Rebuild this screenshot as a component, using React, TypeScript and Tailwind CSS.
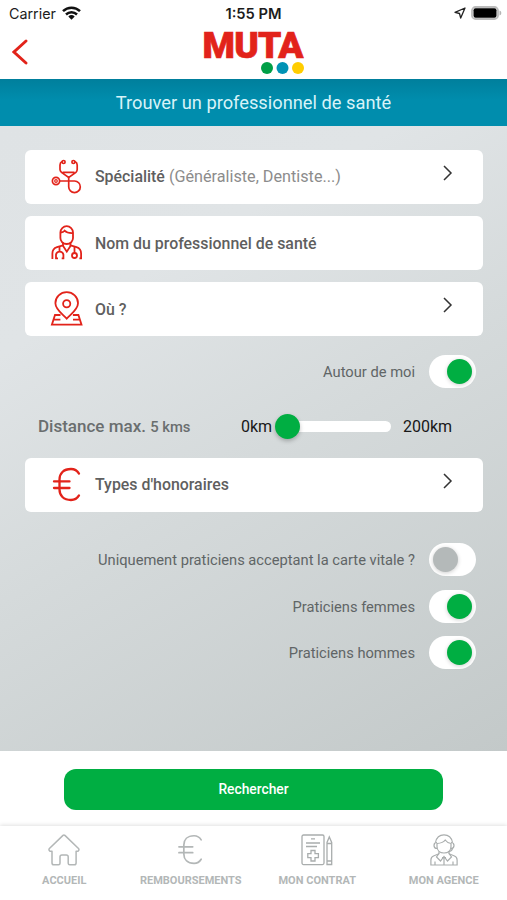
import { useState, type ReactNode } from "react"

import { clsx } from "clsx"

function StethoscopeIcon() {
  return (
    <svg width="34" height="36" viewBox="0 0 34 36" fill="none" stroke="#e2231a" strokeWidth="1.7">
      <circle cx="13.600" cy="3" r="1.500" />
      <circle cx="23.400" cy="3" r="1.500" />
      <path d="M12 2.600C10.400 3.400 10 4.600 10 6v4.600c0 1.200.6 2 1.500 2.800l7.200 5 7.200-5c.9-.8 1.300-1.600 1.300-2.800V6c0-1.400-.6-2.600-2.200-3.400M12.500 13.300h12" />
      <circle cx="6" cy="22" r="3.600" />
      <circle cx="6" cy="22" r="1.300" strokeWidth="1.200" />
      <path d="M9.600 22h15a5.800 5.800 0 1 1-5.900 5.800v-9.500" />
    </svg>
  )
}

function DoctorIcon() {
  return (
    <svg width="34" height="36" viewBox="0 0 34 36" fill="none" stroke="#e2231a" strokeWidth="1.800">
      <path d="M10.400 13V7.500a6.300 6.300 0 0 1 12.600 0V13c0 2.800-2.200 6-6.300 6s-6.300-3.200-6.300-6Z" />
      <path d="M10.600 7.500c2.200-.2 3.200-.8 4-1.800 2 2 5 2.600 8.300 2.400" />
      <path d="M13 17.500v2.800L7 22.200c-3 1-4.600 3.400-4.600 6.400V34M20.500 17.500v2.800l6 1.900c3 1 4.600 3.400 4.600 6.400V34" />
      <path d="m12.800 20.500 4 6.200 4-6.200" />
      <path d="M6 34v-4.500a3.800 3.800 0 0 1 7.400 0V34M9.500 25.800v-4.300M8 33.300H5.200M14.200 33.300h-2.500M31.900 33.300h-2.500M24.500 21.500V28" />
      <circle cx="24.500" cy="30.500" r="2.500" />
    </svg>
  )
}

function PinIcon() {
  return (
    <svg width="34" height="36" viewBox="0 0 34 36" fill="none" stroke="#e2231a" strokeWidth="1.800">
      <path d="M16.700 27.600C12 22.600 5.400 18.400 5.400 12.200a11.300 11 0 0 1 22.600 0c0 6.200-6.600 10.400-11.300 15.400Z" />
      <circle cx="16.700" cy="12.700" r="3.600" />
      <path d="M10.500 24H5L1.900 33.600h29.600L28.400 24h-5.500M4 28.600h6.400M29.400 28.600H23" />
    </svg>
  )
}

function EuroIcon({ className }: { className?: string }) {
  return (
    <svg viewBox="0 0 34 36" fill="none" stroke="currentColor" strokeLinecap="round" className={className}>
      <path d="M29 6.600C27 3.200 24.500 2 21 2 13.500 2 9.500 6.500 9.500 12.500v10c0 6 4 10.500 11.500 10.500 3.500 0 6-1.200 8-4.600M4 14.400h15.500M4 21h15.500" />
    </svg>
  )
}

function HomeIcon() {
  return (
    <svg width="32" height="32" viewBox="0 0 32 32" fill="none" stroke="#b3b7b7" strokeWidth="1.500" strokeLinejoin="round">
      <path d="M15 1.400c.6-.6 1.300-.6 1.900 0L30.500 14.500c.9 1 .3 2.800-1.200 2.800h-1.200V29c0 1.200-.7 1.800-1.800 1.800h-4.600c-1 0-1.500-.5-1.500-1.500v-6.500c0-1.200-.7-1.900-1.900-1.900h-4.400c-1.200 0-1.900.7-1.900 1.900v6.500c0 1-.5 1.500-1.500 1.500H5.900c-1.200 0-1.900-.6-1.900-1.800V17.300H2.600c-1.500 0-2.100-1.800-1.200-2.800Z" />
    </svg>
  )
}

function ContractIcon() {
  return (
    <svg width="32" height="32" viewBox="0 0 32 32" fill="none" stroke="#a9adad" strokeWidth="1.300">
      <rect x="1" y="1" width="22" height="29.600" rx="1.500" />
      <path d="M10 4.900h4M5 9h14M5 12.500h11" />
      <path d="M10 16.500h4v3.200h3.400v4H14V27h-4v-3.300H6.800v-4H10Z" />
      <path d="M26 30.500V8.500L28.300 3l2.400 5.500v22ZM26 9.500h4.700M26 27h4.700" />
    </svg>
  )
}

function AgentIcon() {
  return (
    <svg width="32" height="32" viewBox="0 0 32 32" fill="none" stroke="#a9adad" strokeWidth="1.200">
      <path d="M7.500 8.500C8.500 3.500 12 .9 16 .9s7.500 2.600 8.500 7.600" />
      <path d="M9 9.500c4.500-.3 7-1.700 8.200-3.500 1.400 2 3.300 3.200 5.800 3.500v3c0 4-3 6.500-7 6.500s-7-2.500-7-6.500Z" />
      <path d="M9 8.500c-2 0-3 .8-3 2.900s1 3 3 3M23 8.500c2 0 3 .8 3 2.900s-1 3-3 3M24.500 14.500c-.5 2-2 3-4.500 3.200" />
      <path d="M11 17.500v2.200L5.500 22c-2 .9-2.600 2-2.600 4v5h26.200v-5c0-2-.6-3.100-2.600-4L21 19.700v-2.200" />
      <path d="M11 19.500 8.500 23l4 4 3.500-4.500 3.500 4.500 4-4-2.500-3.500M14 23.500h4M16 24v7M7 27.500V31M25 27.500V31" />
    </svg>
  )
}

function Chevron() {
  return (
    <svg width="10" height="16" viewBox="0 0 10 16" fill="none" stroke="#333" strokeWidth="1.500" className="-mt-2">
      <path d="m1 1 7 7-7 7" />
    </svg>
  )
}

function FieldCard({ icon, label, hint, chevron }: { icon: ReactNode; label: string; hint?: string; chevron?: boolean }) {
  return (
    <button className="flex h-[54px] w-full shrink-0 items-center rounded-md bg-white pl-[25px] pr-[30px] text-left">
      {icon}
      <span className="ml-[11px] flex-1 pt-px text-[15.900px] font-medium text-[#5f5f5f]">
        {label}
        {hint && <span className="text-[16.200px] font-normal text-[#8c8c8c]"> {hint}</span>}
      </span>
      {chevron && <Chevron />}
    </button>
  )
}

function ToggleRow({ label, initial }: { label: string; initial: boolean }) {
  const [on, setOn] = useState(initial)

  return (
    <div className="flex h-[46.500px] items-center justify-end pr-[7px]">
      <span className="pt-px text-[14.700px] text-[#606566]">{label}</span>
      <button
        role="switch"
        aria-checked={on}
        aria-label={label}
        onClick={() => setOn(!on)}
        className={clsx("ml-[14px] flex h-[33px] w-[47px] items-center rounded-full bg-white px-[4px]", on && "justify-end")}
      >
        <span
          className={clsx(
            "size-[25px] rounded-full shadow-[0_1px_4px_rgba(0,0,0,0.2)]",
            on ? "bg-[#00ae42]" : "bg-[#b4b9b9]"
          )}
        />
      </button>
    </div>
  )
}

const TABS = [
  { label: "ACCUEIL", icon: <HomeIcon /> },
  { label: "REMBOURSEMENTS", icon: <EuroIcon className="h-8 w-[31px] stroke-[1.9] text-[#b3b7b7]" /> },
  { label: "MON CONTRAT", icon: <ContractIcon /> },
  { label: "MON AGENCE", icon: <AgentIcon /> },
]

function StatusBar() {
  return (
    <div className="grid h-7 grid-cols-3 items-center pl-[9px] pr-[9px] font-['Inter',sans-serif] text-[#1c1c1c]">
      <div className="flex items-center gap-[6px]">
        <span className="text-[14.300px]">Carrier</span>
        <svg width="19" height="14" viewBox="0 0 19 14" fill="none" stroke="#111" strokeWidth="2.500" className="-mt-0.5">
          <path d="M1 5.200a12.200 12.200 0 0 1 17 0M4 8.500a8 8 0 0 1 11 0" />
          <path d="M6.300 10.600a4.700 4.700 0 0 1 6.400 0L9.500 13.800Z" fill="#111" stroke="none" />
        </svg>
      </div>
      <span className="text-center text-[14.700px] font-semibold">1:55 PM</span>
      <div className="-mr-1 -mt-0.5 flex items-center justify-end gap-[5px]">
        <svg width="12" height="12" viewBox="0 0 12 12" fill="none" stroke="#222" strokeWidth="1.300" strokeLinejoin="round">
          <path d="M11 1 1 5.300l4.500 1.200L6.700 11Z" />
        </svg>
        <svg width="31" height="14" viewBox="0 0 31 14">
          <rect x="1" y="1" width="26" height="12" rx="3.600" fill="#fff" stroke="#bbb" strokeWidth="1.800" />
          <rect x="2.500" y="2.300" width="23" height="9.400" rx="2" />
          <path d="M28.500 4.500c1.400.5 1.800 1.400 1.800 2.500s-.4 2-1.800 2.500Z" fill="#b5b5b5" />
        </svg>
      </div>
    </div>
  )
}

export default function App() {
  return (
    <div className="flex h-[900px] w-[507px] flex-col overflow-hidden bg-white font-['Roboto',sans-serif]">
      <StatusBar />

      <header className="grid h-[51px] shrink-0 grid-cols-3 items-start">
        <button aria-label="Retour" className="ml-3 mt-[11px] w-4">
          <svg width="16" height="26" viewBox="0 0 16 26" fill="none" stroke="#e2231a" strokeWidth="2.900" strokeLinecap="round">
            <path d="M14 2 2 13l12 11" />
          </svg>
        </button>
        <svg width="102" height="48" viewBox="0 0 102 48" overflow="visible" className="justify-self-center">
          <text x="-0.500" y="29.700" fill="#e2231a" stroke="#e2231a" strokeWidth="0.700" fontFamily="Roboto, sans-serif" fontSize="37" fontWeight="900" textLength="101" lengthAdjust="spacing">
            MUTA
          </text>
          <circle cx="64" cy="40" r="6" fill="#009f47" />
          <circle cx="79.500" cy="40" r="6" fill="#0093b5" />
          <circle cx="95" cy="40" r="6" fill="#ffcd00" />
        </svg>
      </header>

      <h1 className="flex h-[47px] shrink-0 items-center justify-center bg-linear-to-b from-[#007f9c] via-[#008dad] via-45% to-[#008dad] text-[18.300px] text-[#d8f3f8]">
        Trouver un professionnel de santé
      </h1>

      <main className="flex h-[625px] shrink-0 flex-col bg-linear-[150deg,#dfe3e5,#e0e4e6_25%,#d5dadb_52%,#c3c9c9] px-[25px] pr-[24px] pt-6">
        <div className="flex flex-col gap-3">
          <FieldCard icon={<StethoscopeIcon />} label="Spécialité" hint="(Généraliste, Dentiste...)" chevron />
          <FieldCard icon={<DoctorIcon />} label="Nom du professionnel de santé" />
          <FieldCard icon={<PinIcon />} label="Où ?" chevron />
        </div>

        <div className="mt-3">
          <ToggleRow label="Autour de moi" initial />
        </div>

        <div className="mb-4 mt-[17px] flex h-[30px] items-center pl-[13px]">
          <p className="w-[203px] text-[17px] font-medium text-[#6a6e6f]">
            Distance max. <span className="text-[14.800px]">5 kms</span>
          </p>
          <span className="w-[34px] text-[16px] text-[#181818]">0km</span>
          <div className="flex h-[11px] w-[116px] items-center rounded-full bg-white">
            <span className="size-[25px] shrink-0 rounded-full bg-[#00ae42] shadow-[0_2px_4px_rgba(0,0,0,0.25)]" />
          </div>
          <span className="ml-3 text-[16px] text-[#181818]">200km</span>
        </div>

        <FieldCard icon={<EuroIcon className="h-9 w-[34px] stroke-[2.300] text-[#e2231a]" />} label="Types d'honoraires" chevron />

        <div className="mt-[25px]">
          <ToggleRow label="Uniquement praticiens acceptant la carte vitale ?" initial={false} />
          <ToggleRow label="Praticiens femmes" initial />
          <ToggleRow label="Praticiens hommes" initial />
        </div>
      </main>

      <div className="flex h-[75px] shrink-0 justify-center pt-[18px]">
        <button className="h-[41px] w-[379px] rounded-xl bg-[#00ae42] text-[13.800px] font-medium text-white">Rechercher</button>
      </div>

      <nav className="grid h-[74px] shrink-0 grid-cols-4 bg-white pl-px pt-2 shadow-[0_-1px_4px_rgba(0,0,0,0.12)]">
        {TABS.map((tab) => (
          <a key={tab.label} className="flex flex-col items-center gap-[7px]">
            {tab.icon}
            <span className="text-[11px] font-bold leading-4 text-[#b3b7b7]">{tab.label}</span>
          </a>
        ))}
      </nav>
    </div>
  )
}
